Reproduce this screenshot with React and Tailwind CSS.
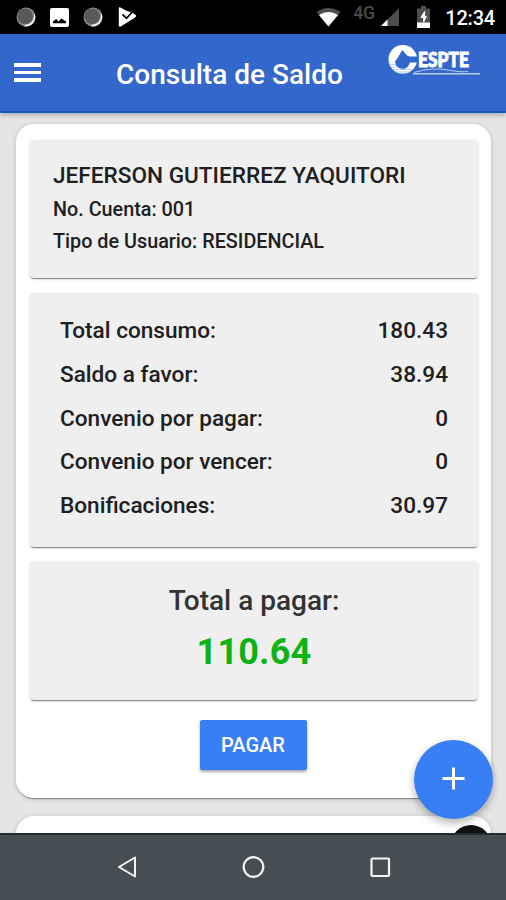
const charges = [
  { label: "Total consumo:", value: "180.43" },
  { label: "Saldo a favor:", value: "38.94" },
  { label: "Convenio por pagar:", value: "0" },
  { label: "Convenio por vencer:", value: "0" },
  { label: "Bonificaciones:", value: "30.97" },
];

function SyncDot() {
  return (
    <svg className="h-5 w-5" viewBox="0 0 20 20" aria-hidden="true">
      <circle cx="10" cy="10" r="9.5" fill="#8a8a8a" />
      <path d="M18.6 6.4A9.5 9.5 0 0 1 8 19.2L10 17.6A8.4 8.4 0 0 0 17.8 8Z" fill="#f2f2f2" />
      <circle cx="9.2" cy="9.2" r="7.8" fill="#595959" />
    </svg>
  );
}

function StatusBar() {
  return (
    <div className="flex h-[34px] shrink-0 items-center justify-between bg-black pl-4 pr-[11px] text-white">
      <div className="flex items-center">
        <SyncDot />
        <svg className="ml-[14px] h-[19px] w-[19px]" viewBox="0 0 19 19" aria-hidden="true">
          <rect width="19" height="19" rx="2" fill="#fff" />
          <path d="M3 15.200V13.500L6.200 11l2.200 2.400 3-3 4.600 3v1.800z" fill="#000" />
        </svg>
        <div className="ml-[14px]">
          <SyncDot />
        </div>
        <svg className="ml-[15px] h-5 w-[19px]" viewBox="0 0 19 20" aria-hidden="true">
          <path d="M.8 1.200Q1-.2 2.400.5L9 4 14 5.500 18 8.200Q18.500 10 16 11.200L2.600 19.400Q1 20.200.8 18.600Z" fill="#fff" />
          <path d="M4.500 7.500l4 3.800L15.500 3.500" fill="none" stroke="#000" strokeWidth="1.800" />
          <path d="M14.500 5.500L16.500 4" stroke="#000" strokeWidth="2" />
        </svg>
      </div>
      <div className="flex items-center">
        <svg className="h-5 w-[26px]" viewBox="0 0 26 20" aria-hidden="true">
          <path d="M1.500 5Q13-3 25.500 5L13.500 19.500Z" fill="#4d4d4d" />
          <path d="M4 8Q13.500 2 23 8L13.500 19.500Z" fill="#fff" />
        </svg>
        <span className="relative -top-[4px] ml-[12px] w-[21px] text-[17.500px] font-medium leading-5 tracking-[-0.3px] text-[#4a4a4a]">
          4G
        </span>
        <svg className="ml-[7px] h-[18px] w-[18px]" viewBox="0 0 18 18" aria-hidden="true">
          <path d="M18 0v18H0z" fill="#4d4d4d" />
          <path d="M6.500 11.500V18H0z" fill="#fff" />
        </svg>
        <svg className="ml-[18px] h-[22px] w-[13px]" viewBox="0 0 13 22" aria-hidden="true">
          <path d="M4 0h5v2.500h4V22H0V2.500h4z" fill="#4d4d4d" />
          <path d="M0 16.500h13V22H0z" fill="#fff" />
          <path d="M7.600 5.500L4 11.500h2.600v4.500L9.500 10.400H7.600z" fill="#fff" stroke="#fff" />
        </svg>
        <span className="ml-[15px] mt-[2px] text-[20px] font-medium leading-6 tracking-[-0.2px]">12:34</span>
      </div>
    </div>
  );
}

function Logo() {
  return (
    <svg className="h-[34px] w-[96px]" viewBox="0 0 96 34" aria-hidden="true">
      <circle cx="14.800" cy="15.300" r="14.300" fill="#fff" />
      <path
        d="M14.300 6L19 11.500L21.500 12.500H30V18.500H22Q20 24.500 15 25Q7.500 24.500 7 17.500L9.500 14Z"
        fill="#3367cb"
      />
      <path d="M1.500 20.500h6M3 23h8M4 25.500h20M6.500 28h16" stroke="#8fade6" strokeWidth=".6" />
      <text
        x="30"
        y="23"
        fill="#fff"
        stroke="#fff"
        strokeWidth="1"
        fontFamily="Lato, sans-serif"
        fontSize="20.500"
        fontWeight="900"
        textLength="51"
        lengthAdjust="spacingAndGlyphs"
      >
        ESPTE
      </text>
      <path d="M26 28.500Q44 23 60 26T80 27" fill="none" stroke="#c5d6f5" strokeWidth=".9" />
      <path d="M25 29.700h67" stroke="#b9cdf2" strokeWidth="1.500" />
    </svg>
  );
}

function Header() {
  return (
    <header className="relative z-10 flex h-[79px] shrink-0 items-start border-b-2 border-[#1558bb] bg-[#3367cb] text-white shadow-[0_2px_5px_rgba(0,0,0,0.25)]">
      <div className="ml-[14px] mt-[29px] flex w-[27px] flex-col gap-1">
        <span className="h-[4px] bg-white" />
        <span className="h-[3px] bg-white" />
        <span className="h-[4px] bg-white" />
      </div>
      <h1 className="ml-[75px] mt-[25px] w-[229px] whitespace-nowrap text-[28px] font-medium leading-8">
        Consulta de Saldo
      </h1>
      <div className="ml-[43px] mt-[10px]">
        <Logo />
      </div>
    </header>
  );
}

function Panel({ className, children }) {
  return (
    <section
      className={`rounded-[4px] bg-[#efefef] shadow-[0_2px_1px_-1px_rgba(0,0,0,0.4),0_1px_3px_rgba(0,0,0,0.2)] ${className}`}
    >
      {children}
    </section>
  );
}

function NavBar() {
  return (
    <nav className="flex h-[67px] shrink-0 items-center justify-center gap-[101px] border-t-2 border-[#193133] bg-[#464e53] pb-[2px]">
      <svg className="h-[26px] w-[26px]" viewBox="0 0 26 26" fill="none" stroke="#f1f5f6" strokeWidth="2" strokeLinejoin="round" aria-hidden="true">
        <path d="M22 3.500v19L6 13z" />
      </svg>
      <svg className="h-[26px] w-[26px]" viewBox="0 0 26 26" fill="none" stroke="#f1f5f6" strokeWidth="2.200" aria-hidden="true">
        <circle cx="13.500" cy="13" r="9.800" />
      </svg>
      <svg className="h-[26px] w-[26px]" viewBox="0 0 26 26" fill="none" stroke="#f1f5f6" strokeWidth="2.200" strokeLinejoin="round" aria-hidden="true">
        <rect x="4.500" y="4.500" width="17.500" height="17.500" rx="1" />
      </svg>
    </nav>
  );
}

export default function App() {
  return (
    <div className="flex h-[900px] w-[506px] flex-col overflow-hidden font-['Roboto',sans-serif]">
      <StatusBar />
      <Header />

      <main className="relative flex min-h-0 flex-1 flex-col gap-[18px] overflow-hidden bg-[#e5e5e5] pl-4 pr-[15px] pt-[11px]">
        <article className="flex h-[674px] shrink-0 flex-col rounded-[18px] bg-white pl-[14px] pr-[13px] pt-4 shadow-[0_2px_1px_-1px_rgba(0,0,0,0.35),0_1px_5px_rgba(0,0,0,0.2)]">
          <Panel className="h-[138px] px-[23px] pt-[21px] font-medium text-[#202020]">
            <h2 className="whitespace-nowrap text-[22.6px] leading-[30px]">JEFERSON GUTIERREZ YAQUITORI</h2>
            <p className="mt-[3px] text-[19.8px] leading-8">No. Cuenta: 001</p>
            <p className="text-[19.8px] leading-8">Tipo de Usuario: RESIDENCIAL</p>
          </Panel>

          <Panel className="mt-[15px] h-[254px] px-[30px] pt-[16.5px]">
            {charges.map((item) => (
              <div
                key={item.label}
                className="flex h-[43.6px] items-center justify-between text-[22.6px] font-medium text-[#202020]"
              >
                <span>{item.label}</span>
                <span>{item.value}</span>
              </div>
            ))}
          </Panel>

          <Panel className="mt-[14px] h-[139px] pt-5 text-center">
            <h3 className="text-[28px] font-medium leading-10 text-[#333]">Total a pagar:</h3>
            <p className="mt-[10px] text-[36px] font-bold leading-[42px] tracking-[0.2px] text-[#0db314]">110.64</p>
          </Panel>

          <button className="mr-[2px] mt-5 h-[50px] w-[107px] self-center rounded-[2px] bg-[#387ef5] text-[20px] font-medium text-white shadow-[0_2px_3px_rgba(0,0,0,0.35)]">
            PAGAR
          </button>
        </article>

        <article className="relative h-40 shrink-0 rounded-[18px] bg-white shadow-[0_1px_5px_rgba(0,0,0,0.2)]">
          <span className="absolute right-0 top-[9px] h-10 w-10 rounded-full bg-[#111]" />
        </article>

        <button
          className="absolute right-[13px] top-[627px] flex h-[79px] w-[79px] items-center justify-center rounded-full bg-[#387ef5] pb-[2px] shadow-[0_4px_8px_rgba(0,0,0,0.3)]"
          aria-label="Agregar"
        >
          <svg className="h-[23px] w-[23px]" viewBox="0 0 23 23" stroke="#fff" strokeWidth="3" aria-hidden="true">
            <path d="M11.500.5v22M.5 11.500h22" />
          </svg>
        </button>
      </main>

      <NavBar />
    </div>
  );
}
